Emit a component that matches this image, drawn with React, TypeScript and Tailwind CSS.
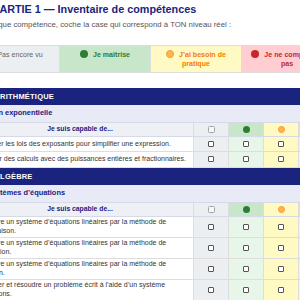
const GRID = 'grid grid-cols-[226px_35px_35px_35px_35px]';

type Row = { text: string; h: string };

const levels = [
  { head: 'bg-[#eceff1]', body: 'bg-[#eceff1]', icon: 'box' },
  { head: 'bg-[#c8e6c9]', body: 'bg-[#e8f5e9]', icon: 'h-[7px] w-[7px] rounded-full bg-[#2e7d32]' },
  { head: 'bg-[#fff9c4]', body: 'bg-[#fff9c4]', icon: 'h-[7px] w-[7px] rounded-full border border-[#f59a3c] bg-[#ffb74d]' },
  { head: 'bg-[#ffcdd2]', body: 'bg-[#ffebee]', icon: 'h-[7px] w-[7px] rounded-full bg-[#c62828]' },
];

const sections: { title: string; sub: string; rows: Row[] }[] = [
  {
    title: 'ARITHMÉTIQUE',
    sub: 'Notation exponentielle',
    rows: [
      { text: 'Appliquer les lois des exposants pour simplifier une expression.', h: 'h-[15.5px]' },
      { text: 'Effectuer des calculs avec des puissances entières et fractionnaires.', h: 'h-[15.5px]' },
    ],
  },
  {
    title: 'ALGÈBRE',
    sub: 'Les systèmes d\u2019équations',
    rows: [
      { text: 'Résoudre un système d\u2019équations linéaires par la méthode de comparaison.', h: 'h-[21px]' },
      { text: 'Résoudre un système d\u2019équations linéaires par la méthode de substitution.', h: 'h-[21px]' },
      { text: 'Résoudre un système d\u2019équations linéaires par la méthode de réduction.', h: 'h-[21px]' },
      { text: 'Modéliser et résoudre un problème écrit à l\u2019aide d\u2019un système d\u2019équations.', h: 'h-[21px]' },
    ],
  },
];

function Legend() {
  return (
    <div className="mt-[15.5px] grid grid-cols-4 border border-[#dddddd] text-center text-[7.1px] leading-[9px]">
      <div className="bg-[#eceff1] px-[6px] pb-[3px] pt-[4px] text-[#666]">
        <span className="mr-[5px] inline-block h-[8px] w-[8px] rounded-[1.5px] border border-[#a0a4a8] bg-[#f7f8f9] align-[-1.5px]" />
        Pas encore vu
      </div>
      <div className="border-l border-[#dddddd] bg-[#c8e6c9] px-[6px] pb-[3px] pt-[4px] font-bold text-[#2e7d32]">
        <span className="mr-[5px] inline-block h-[8px] w-[8px] rounded-full bg-[#2e7d32] align-[-1.5px]" />
        Je maîtrise
      </div>
      <div className="border-l border-[#dddddd] bg-[#fff9c4] px-[6px] pb-[3px] pt-[4px] font-bold text-[#f57c00]">
        <span className="mr-[5px] inline-block h-[8px] w-[8px] rounded-full border border-[#f59a3c] bg-[#ffb74d] align-[-1.5px]" />
        J’ai besoin de pratique
      </div>
      <div className="border-l border-[#dddddd] bg-[#ffcdd2] px-[6px] pb-[3px] pt-[4px] font-bold text-[#c62828]">
        <span className="mr-[5px] inline-block h-[8px] w-[8px] rounded-full bg-[#c62828] align-[-1.5px]" />
        Je ne comprends pas
      </div>
    </div>
  );
}

function Section({ title, sub, rows }: { title: string; sub: string; rows: Row[] }) {
  return (
    <div>
      <div className="h-[17.5px] bg-[#1a237e] pl-[27.5px] text-[7.5px] font-bold leading-[17.5px] tracking-[0.2px] text-white">
        {title}
      </div>
      <div className="h-[16.5px] bg-[#e8eaf6] pl-[6px] text-[7.4px] font-bold leading-[16.5px] text-[#1a237e]">{sub}</div>
      <div className={`${GRID} h-[15px] border-y border-[#d6d9e6]`}>
        <div className="flex items-center justify-center bg-[#eef0f6] text-[6.8px] font-bold text-[#1a237e]">Je suis capable de...</div>
        {levels.map((l, i) => (
          <div key={i} className={`flex items-center justify-center border-l border-[#dddddd] ${l.head}`}>
            {l.icon === 'box' ? (
              <span className="block h-[7px] w-[7px] rounded-[1.5px] border border-[#a0a4a8] bg-[#f7f8f9]" />
            ) : (
              <span className={`block ${l.icon}`} />
            )}
          </div>
        ))}
      </div>
      {rows.map((r) => (
        <div key={r.text} className={`${GRID} ${r.h} border-b border-[#dddddd]`}>
          <div className="flex items-center bg-white pl-[7px] pr-[5px] text-[7px] leading-[8.4px] text-[#333]">{r.text}</div>
          {levels.map((l, i) => (
            <div key={i} className={`flex items-center justify-center border-l border-[#dddddd] ${l.body}`}>
              <span className="block h-[6px] w-[6px] rounded-[1px] border border-[#555] bg-white" />
            </div>
          ))}
        </div>
      ))}
    </div>
  );
}

export default function App() {
  return (
    <div className="flex h-[300px] w-[300px] justify-center overflow-hidden bg-white font-['Liberation_Sans',Arial,sans-serif]">
      <div className="w-[366px] shrink-0">
        <h1 className="pl-[26px] pt-[3px] text-[10.8px] font-bold leading-[13px] text-[#1a237e]">
          PARTIE 1 — Inventaire de compétences
        </h1>
        <p className="mt-[3.5px] text-[7.8px] leading-[10px] text-[#555]">
          Pour chaque compétence, coche la case qui correspond à TON niveau réel :
        </p>
        <Legend />
        <div className="mt-[15px]">
          {sections.map((s) => (
            <Section key={s.title} {...s} />
          ))}
        </div>
      </div>
    </div>
  );
}
